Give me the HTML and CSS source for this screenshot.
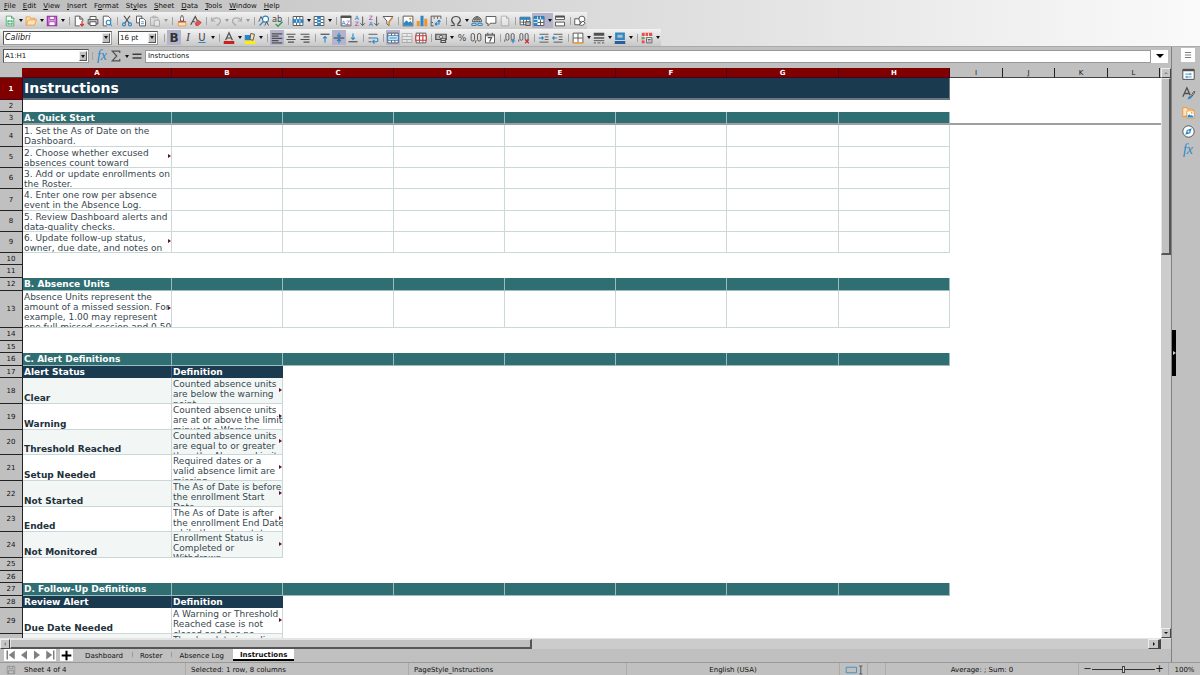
FILE: index.html
```html
<!DOCTYPE html>
<html lang="en">
<head>
<meta charset="utf-8">
<title>Instructions</title>
<link rel="stylesheet" href="styles.css">
</head>
<body>
<div class="app">
<header class="top">
<nav class="menubar" aria-label="Main menu">
<button><u>F</u>ile</button><button><u>E</u>dit</button><button><u>V</u>iew</button><button><u>I</u>nsert</button><button>F<u>o</u>rmat</button><button>St<u>y</u>les</button><button><u>S</u>heet</button><button><u>D</u>ata</button><button><u>T</u>ools</button><button><u>W</u>indow</button><button><u>H</u>elp</button>
</nav>
<div class="toolbar" role="toolbar" aria-label="Standard">
<button class="tool" aria-label="New"><svg viewBox="0 0 16 16"><path class="f-white s-green" d="M3 1.5h7l3 3v10H3z"/><path class="s-green" d="M10 1.5v3h3"/><path class="f-green" d="M4.500 7h7v6h-7z"/><path class="s-white" d="M5 10h6M8 7v6"/></svg></button><button class="drop" aria-label="New options"></button>
<button class="tool" aria-label="Open"><svg viewBox="0 0 16 16"><path class="f-cream s-orange" d="M1.500 13.500v-11h5l1 2h6v2"/><path class="f-cream s-orange" d="M1.500 13.500l3-7h11l-3 7z"/></svg></button><button class="drop" aria-label="Open options"></button>
<button class="tool" aria-label="Save"><svg viewBox="0 0 16 16"><path class="f-lilac s-purple2" d="M2 2h12v12H2z"/><path class="f-white s-purple" d="M5 2h6v4H5zM4 9h8v5H4z"/></svg></button><button class="drop" aria-label="Save options"></button>
<span class="sep"></span>
<button class="tool" aria-label="Export as PDF"><svg viewBox="0 0 16 16"><path class="f-white s-dark" d="M9 14.500H3v-13h6l4 4v3M9 1.500v4h4"/><path class="s-red2" d="M12 8v6M9.500 12l2.500 2.500L14.500 12"/></svg></button>
<button class="tool" aria-label="Print"><svg viewBox="0 0 16 16"><path class="f-grey s-dark" d="M1.500 6h13v6h-13z"/><path class="f-white s-dark" d="M4 2h8v4H4zM4 9h8v5H4z"/></svg></button>
<button class="tool" aria-label="Print preview"><svg viewBox="0 0 16 16"><path class="f-white s-dark" d="M13 8V5L9.500 1.500H3v13h5"/><circle class="f-white s-blue2" cx="10" cy="10" r="3"/><path class="s-blue2" d="M12.500 12.500l2 2"/></svg></button>
<span class="sep"></span>
<button class="tool" aria-label="Cut"><svg viewBox="0 0 16 16"><path class="s-dark2" d="M4 1l7 10M12 1L5 11"/><circle class="s-blue2" cx="4" cy="12.500" r="2"/><circle class="s-blue2" cx="12" cy="12.500" r="2"/></svg></button>
<button class="tool" aria-label="Copy"><svg viewBox="0 0 16 16"><path class="f-white s-dark" d="M2 1.500h7v9H2z"/><path class="f-white s-dark" d="M6 4.500h5l3 3v7H6z"/><path class="s-blue" d="M8 9h4M8 11.500h4"/></svg></button>
<button class="tool off" aria-label="Paste"><svg viewBox="0 0 16 16"><path class="s-dark" d="M2 3h10v11H2zM5 1.500h4V4H5z"/><path class="f-white s-dark" d="M7 7h7v8H7z"/></svg></button><button class="drop off" aria-label="Paste options"></button>
<span class="sep"></span>
<button class="tool" aria-label="Clone formatting"><svg viewBox="0 0 16 16"><path class="f-cream s-orange" d="M3 9h10v5.500H3z"/><path class="f-red" d="M3 8h10v2H3z"/><path class="f-white s-dark" d="M6 8V5l1-4h2l1 4v3z"/></svg></button>
<button class="tool" aria-label="Clear formatting"><svg viewBox="0 0 16 16"><path class="s-dark2" d="M1 13L7 2l3 6M3 9h4"/><path class="f-red s-red" d="M7 11l4-4 4 3-4 4H8z"/></svg></button>
<span class="sep"></span>
<button class="tool off" aria-label="Undo"><svg viewBox="0 0 16 16"><path class="s-dark2" d="M2 3v5h5M2 8c4-7 12-4 12 0 0 2-2 4-5 6"/></svg></button><button class="drop off" aria-label="Undo list"></button>
<button class="tool off" aria-label="Redo"><svg viewBox="0 0 16 16"><path class="s-dark2" d="M14 3v5H9M14 8C10 1 2 4 2 8c0 2 2 4 5 6"/></svg></button><button class="drop off" aria-label="Redo list"></button>
<span class="sep"></span>
<button class="tool" aria-label="Find and replace"><svg viewBox="0 0 16 16"><circle class="f-white s-blue2" cx="10" cy="5.500" r="4"/><path class="s-blue2" d="M7 9l-5 5"/><path class="s-dark" d="M1 9l3-7 2 4M9 14l2.500-5 2.500 5"/></svg></button>
<button class="tool" aria-label="Spelling"><svg viewBox="0 0 16 16"><text x="0" y="9" font-size="11">ab</text><path class="s-green2" d="M5 12l3 3 6-6"/></svg></button>
<span class="sep"></span>
<button class="tool" aria-label="Row"><svg viewBox="0 0 16 16"><path class="f-white s-dark" d="M1.500 2h13v12h-13z"/><path class="s-dark" d="M6 2v12M10.500 2v12"/><path class="f-blue" d="M1 5.500h14v5H1z"/><path class="s-white" d="M6 6v4M10.500 6v4"/></svg></button><button class="drop" aria-label="Row options"></button>
<button class="tool" aria-label="Column"><svg viewBox="0 0 16 16"><path class="f-white s-dark" d="M1.500 2h13v12h-13z"/><path class="s-dark" d="M2 6h12M2 10h12"/><path class="f-blue" d="M5.500 2h5v12h-5z"/><path class="s-white" d="M6 6h4M6 10h4"/></svg></button><button class="drop" aria-label="Column options"></button>
<span class="sep"></span>
<button class="tool" aria-label="Sort"><svg viewBox="0 0 16 16"><path class="f-white s-dark" d="M1.500 1.500h13v13h-13z"/><path class="f-dark" d="M1 1h14v3H1z"/><text class="t-blue" x="2" y="13" font-size="8">A</text><text class="t-purple" x="8" y="13" font-size="8">Z</text></svg></button>
<button class="tool" aria-label="Sort ascending"><svg viewBox="0 0 16 16"><text class="t-blue" x="1" y="7" font-size="8">A</text><text class="t-purple" x="1" y="15" font-size="8">Z</text><path class="s-dark" d="M11.500 2v12M8.500 11l3 3 3-3"/></svg></button>
<button class="tool" aria-label="Sort descending"><svg viewBox="0 0 16 16"><text class="t-purple" x="1" y="7" font-size="8">Z</text><text class="t-blue" x="1" y="15" font-size="8">A</text><path class="s-dark" d="M11.500 2v12M8.500 11l3 3 3-3"/></svg></button>
<button class="tool" aria-label="AutoFilter"><svg viewBox="0 0 16 16"><path class="f-white s-dark" d="M1.500 2h13L9.500 8v6L6.500 12V8z"/><path class="s-orange2" d="M14 4l-4.500 5v4"/></svg></button>
<span class="sep"></span>
<button class="tool" aria-label="Insert image"><svg viewBox="0 0 16 16"><path class="f-white s-dark" d="M1.500 1.500h13v13h-13z"/><path class="f-blue" d="M2 14V11l4-4 3 3 2-2 3 3v3z"/><circle class="f-orange" cx="11" cy="5" r="1.500"/></svg></button>
<button class="tool" aria-label="Insert chart"><svg viewBox="0 0 16 16"><path class="f-orange" d="M1 8h4v7H1z"/><path class="f-blue" d="M6 1h4v14H6z"/><path class="f-orange" d="M11 5h4v10h-4z"/></svg></button>
<button class="tool" aria-label="Pivot table"><svg viewBox="0 0 16 16"><path class="s-dark" d="M5 14.500H1.500v-13h13V5M5.500 2v3M2 10h2M10 2v3"/><path class="s-blue2" d="M7 12h5V7M9 10l-2 2 2 2M10 9l2-2 2 2"/></svg></button>
<span class="sep"></span>
<button class="tool" aria-label="Special character"><svg viewBox="0 0 16 16"><path class="s-dark2" d="M1 14h4.500v-2C0 8 2 2 8 2s8 6 2.500 10v2H15"/></svg></button><button class="drop" aria-label="Character options"></button>
<button class="tool" aria-label="Hyperlink"><svg viewBox="0 0 16 16"><path class="s-dark" d="M2 9c0-9 12-9 12 0zM8 2v7M3 5.500h10M8 2C5 4 5 7 5 9M8 2c3 2 3 5 3 7"/><rect class="s-blue2" x="1" y="11" width="6" height="3" rx="1.500"/><rect class="s-blue2" x="9" y="11" width="6" height="3" rx="1.500"/></svg></button>
<button class="tool" aria-label="Comment"><svg viewBox="0 0 16 16"><path class="f-white s-dark" d="M1.500 2h13v9H7l-3 3.500V11H1.500z"/></svg></button>
<button class="tool off" aria-label="Headers and footers"><svg viewBox="0 0 16 16"><path class="f-white s-dark" d="M3 1.500h7l3 3v10H3zM10 1.500v3h3"/></svg></button>
<span class="sep"></span>
<button class="tool" aria-label="Print area"><svg viewBox="0 0 16 16"><path class="f-white s-dark" d="M1.500 3h13v10h-13zM2 9.500h12M6 6v7M10 6v7"/><path class="f-blue" d="M1 3h14v3.500H1z"/><path class="f-grey s-dark" d="M9 9h6v5H9z"/></svg></button>
<button class="tool on" aria-label="Freeze rows and columns"><svg viewBox="0 0 16 16"><path class="f-white s-dark" d="M1.500 2h13v12h-13zM2 10h12M10 2v12"/><path class="f-blue" d="M1 2h14v4H6v8H1z"/><path class="s-white" d="M6 2v4H1M10 2v4M1 10h5"/></svg></button><button class="drop on" aria-label="Freeze options"></button>
<button class="tool" aria-label="Split window"><svg viewBox="0 0 16 16"><path class="f-white s-dark" d="M2 1.500h12V6H2zM2 9.500h12v5H2z"/><path class="f-dark" d="M2 1h12v2.500H2z"/></svg></button>
<span class="sep"></span>
<button class="tool" aria-label="Draw functions"><svg viewBox="0 0 16 16"><path class="f-white s-dark" d="M1 5h7v8H1z"/><circle class="f-white s-dark" cx="10.500" cy="5.500" r="4"/><path class="f-white s-dark" d="M7 13l5-5 3 3-4 3z"/></svg></button>
</div>
<div class="toolbar" role="toolbar" aria-label="Formatting">
<span class="combo font-name"><input aria-label="Font name" value="Calibri"><button class="spin" aria-label="Font list"></button></span>
<span class="combo font-size"><input aria-label="Font size" value="16 pt"><button class="spin" aria-label="Size list"></button></span>
<span class="sep"></span>
<button class="tool on glyph bold">B</button>
<button class="tool glyph italic">I</button>
<button class="tool glyph under">U</button><button class="drop" aria-label="Underline options"></button>
<span class="sep"></span>
<button class="tool" aria-label="Font color"><svg viewBox="0 0 16 16"><path class="s-dark2" d="M3.500 11L8 1l4.500 10M5 8h6"/><path class="f-crimson" d="M1 12h14v4H1z"/></svg></button><button class="drop" aria-label="Font color options"></button>
<button class="tool" aria-label="Highlight color"><svg viewBox="0 0 16 16"><path class="f-blue" d="M1 4h7l2 3-2 4H1z"/><path class="f-cream s-dark" d="M9 2l5 1-2 8-4-1z"/><path class="f-yellow" d="M1 12h14v4H1z"/></svg></button><button class="drop" aria-label="Highlight options"></button>
<span class="sep"></span>
<button class="tool on" aria-label="Align left"><svg viewBox="0 0 16 16"><path class="s-dark2" d="M1 2.500h14M1 5.500h9M1 8.500h14M1 11.500h9M1 14.500h14"/></svg></button>
<button class="tool" aria-label="Align center"><svg viewBox="0 0 16 16"><path class="s-dark2" d="M2 3h12M4 6.500h8M2 10h12M4 13.500h8"/></svg></button>
<button class="tool" aria-label="Align right"><svg viewBox="0 0 16 16"><path class="s-dark2" d="M2 3h12M6 6.500h8M2 10h12M6 13.500h8"/></svg></button>
<span class="sep"></span>
<button class="tool" aria-label="Align top"><svg viewBox="0 0 16 16"><path class="s-dark2" d="M2 3h12"/><path class="s-blue2" d="M8 14V6M5.500 8.500L8 6l2.500 2.500"/></svg></button>
<button class="tool on" aria-label="Center vertically"><svg viewBox="0 0 16 16"><path class="s-dark2" d="M1 8h14"/><path class="s-blue2" d="M8 1v5M5.500 4L8 6.500 10.500 4M8 15v-5M5.500 12L8 9.500l2.500 2.500"/></svg></button>
<button class="tool" aria-label="Align bottom"><svg viewBox="0 0 16 16"><path class="s-dark2" d="M2 13h12"/><path class="s-blue2" d="M8 2v8M5.500 7.500L8 10l2.500-2.500"/></svg></button>
<span class="sep"></span>
<button class="tool" aria-label="Wrap text"><svg viewBox="0 0 16 16"><path class="s-dark" d="M2 3h12M2 13h4M2 8h3"/><path class="s-blue2" d="M5 8h8c2 0 2 5 0 5H8M10 10.500L7.500 13l2.500 2.500"/></svg></button>
<span class="sep"></span>
<button class="tool on" aria-label="Merge and center"><svg viewBox="0 0 16 16"><path class="f-white s-dark" d="M1 1.500h14v13H1zM6 2v12M10.500 2v12"/><path class="f-white s-blue2" d="M1 5h14v6H1z"/><path class="s-blue2" d="M3 8h10"/></svg></button>
<button class="tool off" aria-label="Merge cells"><svg viewBox="0 0 16 16"><path class="f-white s-dark" d="M1.500 2h13v12h-13zM2 6h12M2 10h12M8 2v4M8 10v4"/></svg></button>
<button class="tool" aria-label="Unmerge cells"><svg viewBox="0 0 16 16"><path class="f-white s-dark" d="M1.500 1.500h13v13h-13zM6 2v12M10.500 2v12"/><path class="f-white s-red2" d="M1 5h14v6H1zM6 5v6M10.500 5v6"/></svg></button>
<span class="sep"></span>
<button class="tool" aria-label="Currency"><svg viewBox="0 0 16 16"><path class="f-grey s-dark2" d="M1 3h14v7H1z"/><circle class="f-white s-dark" cx="8" cy="6.500" r="2"/><path class="f-white s-dark2" d="M8 9h6v5H8zM8 11.500h6"/></svg></button><button class="drop" aria-label="Currency options"></button>
<button class="tool glyph" aria-label="Percent">%</button>
<button class="tool" aria-label="Number format"><svg viewBox="0 0 16 16"><rect class="s-dark" x="1.500" y="2" width="4.500" height="10" rx="2.200"/><path class="s-dark" d="M8 11l-1 3.500"/><rect class="s-dark" x="10" y="2" width="4.500" height="10" rx="2.200"/></svg></button>
<button class="tool" aria-label="Date format"><svg viewBox="0 0 16 16"><path class="f-white s-dark" d="M2 3h12v11.500H2zM2 5h12M5 1v3M11 1v3"/><path class="s-dark2" d="M5 7.500h5L7.500 13"/></svg></button>
<span class="sep"></span>
<button class="tool" aria-label="Add decimal place"><svg viewBox="0 0 16 16"><rect class="s-dark" x="2.500" y="2" width="4" height="9" rx="2"/><rect class="s-dark" x="9.500" y="2" width="4" height="9" rx="2"/><path class="s-dark" d="M1 10v3"/><path class="s-blue2" d="M9 12h6M12 9v6"/></svg></button>
<button class="tool" aria-label="Delete decimal place"><svg viewBox="0 0 16 16"><rect class="s-dark" x="2.500" y="2" width="4" height="9" rx="2"/><rect class="s-dark" x="9.500" y="2" width="4" height="9" rx="2"/><path class="s-dark" d="M1 10v3"/><path class="s-red2" d="M9.500 10l5 5M14.500 10l-5 5"/></svg></button>
<span class="sep"></span>
<button class="tool" aria-label="Increase indent"><svg viewBox="0 0 16 16"><path class="s-dark" d="M2 3h12M9 6.500h5M9 10h5M2 13.500h12"/><path class="s-blue2" d="M1 8h6M5 6l2 2-2 2"/></svg></button>
<button class="tool" aria-label="Decrease indent"><svg viewBox="0 0 16 16"><path class="s-dark" d="M2 3h12M9 6.500h5M9 10h5M2 13.500h12"/><path class="s-blue2" d="M1 8h6M3 6L1 8l2 2"/></svg></button>
<span class="sep"></span>
<button class="tool" aria-label="Borders"><svg viewBox="0 0 16 16"><path class="f-white s-dark" d="M1.500 14.500v-13h13v13M8 2v12M2 8h12"/><path class="s-orange2" d="M1 14.500h14"/></svg></button><button class="drop" aria-label="Borders options"></button>
<button class="tool" aria-label="Border style"><svg viewBox="0 0 16 16"><path class="f-dark" d="M1 1h14v4H1zM1 7h14v2H1z"/><path class="s-dark" d="M1 11.500h14M1 14.500h3M6 14.500h4M12 14.500h3"/></svg></button><button class="drop" aria-label="Border style options"></button>
<button class="tool" aria-label="Border color"><svg viewBox="0 0 16 16"><path class="f-grey s-blue3" d="M3 2h10v7H3z"/><path class="f-navy" d="M1 12h14v4H1z"/></svg></button><button class="drop" aria-label="Border color options"></button>
<span class="sep"></span>
<button class="tool" aria-label="Conditional formatting"><svg viewBox="0 0 16 16"><path class="f-red" d="M1 1h14v5H1zM1 6h5v9H1z"/><path class="f-green" d="M1 6h4v4H1z"/><path class="s-white" d="M5.500 1v14M10 1v6M1 6h14M1 10.500h5"/><path class="f-white s-dark" d="M7.500 7.500h7v7h-7z"/><path class="s-dark" d="M9 10h4M9 12h4"/></svg></button><button class="drop" aria-label="Conditional options"></button>
</div>
</header>

<div class="workspace">
<main class="main">
<div class="formula-bar">
<span class="combo name-box"><input aria-label="Name box" value="A1:H1"><button class="spin" aria-label="Named ranges"></button></span>
<span class="sep"></span>
<button class="tool glyph fx" aria-label="Function wizard">fx</button>
<button class="tool" aria-label="Select function"><svg viewBox="0 0 16 16"><path class="s-dark2" d="M13 4V1.500H3L9 8l-6 6.500h10V12"/></svg></button><button class="drop" aria-label="Function list"></button>
<button class="tool" aria-label="Formula"><svg viewBox="0 0 16 16"><path class="s-dark3" d="M2 5.500h12M2 10.500h12"/></svg></button>
<input class="formula" aria-label="Input line" value="Instructions">
<button class="expand" aria-label="Expand formula bar"></button>
</div>

<div class="grid-area">
<div class="sheet">
<table>
<colgroup><col class="c-head"><col class="c-a"><col class="c-b"><col class="c-b"><col class="c-b"><col class="c-b"><col class="c-b"><col class="c-e"><col class="c-b"><col class="c-i"><col class="c-j"><col class="c-i"><col class="c-j"><col></colgroup>
<thead>
<tr><th class="corner"></th><th class="sel">A</th><th class="sel">B</th><th class="sel">C</th><th class="sel">D</th><th class="sel">E</th><th class="sel">F</th><th class="sel">G</th><th class="sel">H</th><th>I</th><th>J</th><th>K</th><th>L</th><th></th></tr>
</thead>
<tbody>
<tr class="h22"><th class="sel">1</th><td class="title" colspan="8">Instructions</td><td colspan="5"></td></tr>
<tr class="h12"><th>2</th><td colspan="13"></td></tr>
<tr class="h13 section frozen"><th>3</th><td>A. Quick Start</td><td></td><td></td><td></td><td></td><td></td><td></td><td></td><td class="blank" colspan="5"></td></tr>
<tr class="h22 lined"><th>4</th><td><div class="clip">1. Set the As of Date on the<br>Dashboard.</div></td><td></td><td></td><td></td><td></td><td></td><td></td><td></td></tr>
<tr class="h21 lined"><th>5</th><td class="more"><div class="clip">2. Choose whether excused<br>absences count toward</div></td><td></td><td></td><td></td><td></td><td></td><td></td><td></td></tr>
<tr class="h21 lined"><th>6</th><td><div class="clip">3. Add or update enrollments on<br>the Roster.</div></td><td></td><td></td><td></td><td></td><td></td><td></td><td></td></tr>
<tr class="h22 lined"><th>7</th><td><div class="clip">4. Enter one row per absence<br>event in the Absence Log.</div></td><td></td><td></td><td></td><td></td><td></td><td></td><td></td></tr>
<tr class="h21 lined"><th>8</th><td><div class="clip">5. Review Dashboard alerts and<br>data-quality checks.</div></td><td></td><td></td><td></td><td></td><td></td><td></td><td></td></tr>
<tr class="h21 lined"><th>9</th><td class="more"><div class="clip">6. Update follow-up status,<br>owner, due date, and notes on</div></td><td></td><td></td><td></td><td></td><td></td><td></td><td></td></tr>
<tr class="h12"><th>10</th><td colspan="13"></td></tr>
<tr class="h13"><th>11</th><td colspan="13"></td></tr>
<tr class="h13 section"><th>12</th><td>B. Absence Units</td><td></td><td></td><td></td><td></td><td></td><td></td><td></td></tr>
<tr class="h37 lined"><th>13</th><td class="more"><div class="clip">Absence Units represent the<br>amount of a missed session. For<br>example, 1.00 may represent<br>one full missed session and 0.50</div></td><td></td><td></td><td></td><td></td><td></td><td></td><td></td></tr>
<tr class="h13"><th>14</th><td colspan="13"></td></tr>
<tr class="h12"><th>15</th><td colspan="13"></td></tr>
<tr class="h13 section"><th>16</th><td>C. Alert Definitions</td><td></td><td></td><td></td><td></td><td></td><td></td><td></td></tr>
<tr class="h12 heading"><th>17</th><td>Alert Status</td><td>Definition</td></tr>
<tr class="h26 lined tint"><th>18</th><td class="label">Clear</td><td class="more"><div class="clip">Counted absence units<br>are below the warning<br>point.</div></td></tr>
<tr class="h26 lined"><th>19</th><td class="label">Warning</td><td class="more"><div class="clip">Counted absence units<br>are at or above the limit<br>minus the Warning</div></td></tr>
<tr class="h25 lined tint"><th>20</th><td class="label">Threshold Reached</td><td class="more"><div class="clip">Counted absence units<br>are equal to or greater<br>than the Absence Limit.</div></td></tr>
<tr class="h26 lined"><th>21</th><td class="label">Setup Needed</td><td class="more"><div class="clip">Required dates or a<br>valid absence limit are<br>missing.</div></td></tr>
<tr class="h26 lined tint"><th>22</th><td class="label">Not Started</td><td class="more"><div class="clip">The As of Date is before<br>the enrollment Start<br>Date.</div></td></tr>
<tr class="h25 lined"><th>23</th><td class="label">Ended</td><td class="more"><div class="clip">The As of Date is after<br>the enrollment End Date<br>while the roster status</div></td></tr>
<tr class="h26 lined tint"><th>24</th><td class="label">Not Monitored</td><td class="more"><div class="clip">Enrollment Status is<br>Completed or<br>Withdrawn.</div></td></tr>
<tr class="h13"><th>25</th><td colspan="13"></td></tr>
<tr class="h12"><th>26</th><td colspan="13"></td></tr>
<tr class="h13 section"><th>27</th><td>D. Follow-Up Definitions</td><td></td><td></td><td></td><td></td><td></td><td></td><td></td></tr>
<tr class="h12 heading"><th>28</th><td>Review Alert</td><td>Definition</td></tr>
<tr class="h26 lined"><th>29</th><td class="label">Due Date Needed</td><td class="more"><div class="clip">A Warning or Threshold<br>Reached case is not<br>closed and has no</div></td></tr>
<tr class="h26 lined tint"><th></th><td></td><td><div class="clip">The due date is earlier</div></td></tr>
</tbody>
</table>
</div>
<div class="vscroll"><button class="arrow up" aria-label="Scroll up"></button><div class="vthumb"></div><button class="arrow down" aria-label="Scroll down"></button></div>
</div>

<div class="hscroll"><button class="arrow left" aria-label="Scroll left"></button><div class="hthumb"></div><button class="arrow right" aria-label="Scroll right"></button></div>
<nav class="tabs" aria-label="Sheets">
<span class="tab-nav">
<button aria-label="First sheet"><svg viewBox="0 0 16 16"><path class="f-mid" d="M2 2h2v12H2zM13 2v12L5 8z"/></svg></button><button aria-label="Previous sheet"><svg viewBox="0 0 16 16"><path class="f-mid" d="M12 2v12L4 8z"/></svg></button><button aria-label="Next sheet"><svg viewBox="0 0 16 16"><path class="f-mid" d="M4 2v12l8-6z"/></svg></button><button aria-label="Last sheet"><svg viewBox="0 0 16 16"><path class="f-mid" d="M12 2h2v12h-2zM3 2v12l8-6z"/></svg></button>
</span>
<button class="add" aria-label="Add sheet"><svg viewBox="0 0 16 16"><path class="s-black3" d="M1 8h14M8 1v14"/></svg></button>
<button class="tab">Dashboard</button><button class="tab">Roster</button><button class="tab">Absence Log</button><button class="tab active">Instructions</button>
</nav>
</main>
<aside class="sidebar" aria-label="Sidebar">
<button class="menu" aria-label="Sidebar settings"><svg viewBox="0 0 16 16"><path class="s-dark" d="M3 4h10M3 8h10M3 12h10"/></svg></button>
<button aria-label="Properties"><svg viewBox="0 0 16 16"><path class="f-white s-dark" d="M1 2h14v12H1z"/><path class="f-dark" d="M1 1h14v3H1z"/><path class="s-blue" d="M4 7.500h8M10 6v3M4 11h8M6 9.500v3"/></svg></button>
<button aria-label="Styles"><svg viewBox="0 0 16 16"><path class="s-dark2" d="M1 12L6 1l4 9M3 8h6"/><path class="f-white s-dark" d="M15 5l-4 6 1 1 4-6z"/><path class="f-blue" d="M7 15c1-4 3-5 5-3 0 2-2 3-5 3z"/></svg></button>
<button aria-label="Gallery"><svg viewBox="0 0 16 16"><path class="f-cream s-orange" d="M1 13V2h5l1 2h7v3M1 13h5"/><path class="f-white s-orange" d="M6 6h9v9H6z"/><path class="f-blue" d="M7 14v-2l2-2 2 2 1-1 2 2v1z"/><circle class="f-orange" cx="12" cy="8.500" r="1"/></svg></button>
<button aria-label="Navigator"><svg viewBox="0 0 16 16"><circle class="f-white s-dark" cx="8" cy="8" r="7"/><path class="f-blue" d="M12 4l-2 6-6 2 2-6z"/><circle class="f-white" cx="8" cy="8" r="1.200"/></svg></button>
<button class="fx" aria-label="Functions">fx</button>
<button class="handle" aria-label="Hide sidebar"></button>
</aside>
</div>

<footer class="status">
<span class="st-doc"><svg viewBox="0 0 16 16"><path class="s-mid" d="M2 2h12v12H2zM5 2v4h6V2M4 14V9h8v5"/></svg>Sheet 4 of 4</span>
<span class="st-sel">Selected: 1 row, 8 columns</span>
<span class="st-style">PageStyle_Instructions</span>
<span class="st-lang">English (USA)</span>
<span class="st-mode"><svg viewBox="0 0 24 12"><path class="s-blue" d="M1.500 2.500h13v7h-13z"/><path class="s-dark" d="M18 1h4M20 1v10M18 11h4"/></svg></span>
<span class="st-gap"></span>
<span class="st-sum">Average: ; Sum: 0</span>
<span class="st-zoom"><button aria-label="Zoom out">−</button><input type="range" aria-label="Zoom" min="0" max="200" value="100"><button aria-label="Zoom in">+</button></span>
<span class="st-pct">100%</span>
</footer>
</div>
</body>
</html>
```
FILE: styles.css
```css
* { box-sizing: border-box; }

body {
  margin: 0;
  font: 7px/10px "DejaVu Sans", sans-serif;
  color: #111;
  background: #c0c0c0;
}

button, input {
  font: inherit;
  color: inherit;
  margin: 0;
  padding: 0;
  border: 0;
  background: none;
  min-width: 0;
}

.app { display: flex; flex-direction: column; height: 100vh; }

/* Menus and toolbars */
.top { background: linear-gradient(90deg, #bcbcbc, #dedede 55%, #fafafa); border-bottom: 1px solid #aaa; }
.menubar { display: flex; height: 12px; padding-left: 1px; }
.menubar button { padding: 0 4px 0 3px; }

.toolbar {
  display: flex;
  align-items: center;
  width: max-content;
  height: 17px;
  padding-left: 3px;
  background: linear-gradient(#f2f2f2, #c8c8c8);
}

.tool {
  display: flex;
  align-items: center;
  justify-content: center;
  flex: none;
  width: 14px;
  height: 15px;
}
.tool svg { width: 12px; height: 12px; }
.on { background: #b3b3cb; }
.off { opacity: .35; }

.drop { flex: none; width: 7px; height: 15px; display: flex; align-items: center; justify-content: center; }
.drop::before, .spin::before {
  content: "";
  border: 2px solid transparent;
  border-top: 3px solid #111;
  border-bottom: 0;
}

.sep { flex: none; width: 6px; height: 8px; display: flex; justify-content: center; }
.sep::before { content: ""; width: 1px; background: #a2a2a2; }

.glyph { font-size: 9px; color: #444; }
.bold { font-size: 12px; font-weight: bold; color: #333; }
.italic { font: italic 12px "Liberation Serif", serif; }
.under { font-size: 10px; text-decoration: underline; text-decoration-color: #2a87c8; }
.fx { font: italic 14px "Liberation Serif", serif; color: #2a87c8; }

.combo {
  display: flex;
  height: 14px;
  padding: 1px;
  background: #fff;
  border: 1px solid #555;
  border-right-color: #999;
  border-bottom-color: #999;
}
.combo input { flex: 1; width: 0; }
.spin {
  display: flex;
  align-items: center;
  justify-content: center;
  width: 8px;
  background: #c0c0c0;
  border: 1px solid #eee;
  border-right-color: #555;
  border-bottom-color: #555;
}
.font-name { width: 109px; }
.font-name input { font-size: 8px; font-style: italic; }
.font-size { width: 40px; margin: 0 3px 0 6px; }
.name-box { width: 86px; }

/* Icon paint */
svg { display: block; fill: none; overflow: visible; }
svg text { fill: #444; }
svg .t-blue { fill: #1c7cc0; }
svg .t-purple { fill: #a030b0; }
.f-white { fill: #fff; }
.f-green { fill: #48b070; }
.f-cream { fill: #fde2b8; }
.f-lilac { fill: #dd98e4; }
.f-grey { fill: #bbb; }
.f-red { fill: #e05050; }
.f-crimson { fill: #c9211e; }
.f-yellow { fill: #ffee00; }
.f-blue { fill: #2a87c8; }
.f-orange { fill: #f0932b; }
.f-dark { fill: #505050; }
.f-navy { fill: #2a6099; }
.f-mid { fill: #808080; }
.s-white { stroke: #fff; }
.s-green { stroke: #2f9e58; }
.s-green2 { stroke: #2f9e58; stroke-width: 2; }
.s-orange { stroke: #e8912d; }
.s-orange2 { stroke: #e8912d; stroke-width: 2; }
.s-purple { stroke: #9a3aa8; }
.s-purple2 { stroke: #9a3aa8; stroke-width: 2; }
.s-dark { stroke: #505050; stroke-width: 1.2; }
.s-dark2 { stroke: #505050; stroke-width: 1.6; }
.s-dark3 { stroke: #404040; stroke-width: 2; }
.s-mid { stroke: #808080; }
.s-red { stroke: #d03030; }
.s-red2 { stroke: #d03030; stroke-width: 1.5; }
.s-blue { stroke: #2a87c8; }
.s-blue2 { stroke: #2a87c8; stroke-width: 1.5; }
.s-blue3 { stroke: #2a87c8; stroke-width: 3; }
.s-black3 { stroke: #000; stroke-width: 3; }

/* Workspace */
.workspace { display: flex; flex: 1; min-height: 0; }
.main { display: flex; flex-direction: column; flex: 1; min-width: 0; }

.formula-bar { display: flex; align-items: center; height: 21px; padding: 0 3px 3px; }
.formula {
  flex: 1;
  height: 13px;
  margin-left: 1px;
  padding-left: 2px;
  background: #fff;
  border: 1px solid #999;
}
.expand {
  display: flex;
  align-items: center;
  justify-content: center;
  width: 17px;
  height: 13px;
  background: #fff;
}
.expand::before { content: ""; border: 4px solid transparent; border-top: 4px solid #000; border-bottom: 0; }

.grid-area { display: flex; flex: 1; min-height: 0; }
.sheet { flex: 1; min-width: 0; overflow: hidden; background: #fff; }

table { width: 100%; table-layout: fixed; border-spacing: 0; font-size: 9px; }
.c-head { width: 23px; }
.c-a { width: 149px; }
.c-b { width: 111px; }
.c-e { width: 112px; }
.c-i { width: 53px; }
.c-j { width: 52px; }

th {
  padding: 0;
  font-size: 7px;
  font-weight: normal;
  line-height: 8px;
  background: #c0c0c0;
  border-right: 1px solid #222;
  border-bottom: 1px solid #222;
}
thead th { height: 10px; border-bottom-color: #444; }
thead th:last-child { border-right: 0; }
.corner { border-right-color: #800000; }
th.sel { background: #800000; color: #fff; font-weight: bold; border-right-color: #4a0020; border-bottom-color: #4a0020; }

td { padding: 0 1px; line-height: 10px; color: #37474f; white-space: nowrap; }
.h12 { --row: 12px; }
.h13 { --row: 13px; }
.h21 { --row: 21px; }
.h22 { --row: 22px; }
.h25 { --row: 25px; }
.h26 { --row: 26px; }
.h37 { --row: 37px; }
tbody tr { height: var(--row); }

.clip { height: calc(var(--row) - 1px); margin-right: -2px; padding-top: 1px; overflow: hidden; }

.title {
  font-size: 14px;
  line-height: 18px;
  font-weight: bold;
  color: #fff;
  background: #1a3a4f;
  border-right: 1px solid #777;
  border-bottom: 2px solid #6c7780;
}
.section td {
  font-weight: bold;
  color: #fff;
  background: #2f6f73;
  border: 1px solid #9dbcbc;
  border-width: 0 1px 1px 0;
}
.section td.blank { background: #fff; border-right: 0; }
.frozen td, .frozen td.blank { border-bottom: 2px solid #a0a0a0; }
.heading td { font-weight: bold; color: #fff; background: #1a3a4f; }
.heading td:nth-of-type(1) { border-right: 1px solid #49606f; }
.lined td { border: 1px solid #cbd8d8; border-width: 0 1px 1px 0; }
.tint td { background: #f2f7f6; }
.label { font-weight: bold; vertical-align: bottom; }
.lined .label { color: #22303a; }

.more { position: relative; }
.more::after {
  content: "";
  position: absolute;
  right: 0;
  top: 50%;
  margin-top: -3px;
  border: 2px solid transparent;
  border-left: 3px solid #601020;
  border-right: 0;
}

/* Scrollbars */
.arrow {
  flex: none;
  display: flex;
  align-items: center;
  justify-content: center;
  width: 10px;
  height: 10px;
  background: #c6c6c6;
  border: 1px solid #eee;
  border-right-color: #444;
  border-bottom-color: #444;
}
.arrow::before { content: ""; border: 2px solid transparent; }
.up::before { border-bottom-color: #888; border-top: 0; }
.down::before { border-top-color: #111; border-bottom: 0; }
.left::before { border-right-color: #888; border-left: 0; }
.right::before { border-left-color: #111; border-right: 0; }

.vscroll { display: flex; flex-direction: column; width: 10px; background: #ccc; }
.vthumb { height: 31%; background: #c0c0c0; border: 1px solid #e4e4e4; border-right: 2px solid #555; border-bottom: 2px solid #555; }
.down { margin-top: auto; }

.hscroll { display: flex; height: 11px; padding-right: 10px; background: #ccc; border-top: 1px solid #e4e4e4; }
.hthumb { width: 45%; background: #c0c0c0; border: 1px solid #e4e4e4; border-right: 2px solid #555; border-bottom: 2px solid #555; }
.right { margin-left: auto; width: 13px; border-right-width: 3px; }

/* Sheet tabs */
.tabs { display: flex; height: 13px; padding: 0 4px 1px; }
.tab-nav { display: flex; margin-right: 4px; background: #fff; }
.tab-nav button, .add { width: 13px; display: flex; align-items: center; justify-content: center; }
.tab-nav svg { width: 12px; height: 12px; }
.add { background: #fff; margin-right: 4px; }
.add svg { width: 11px; height: 11px; }
.tab { position: relative; padding: 1px 9px 0 8px; }
.tab + .tab::before { content: ""; position: absolute; left: 0; top: 3px; height: 5px; border-left: 1px solid #999; }
.tab.active { padding: 1px 7px 0; font-weight: bold; background: #fff; border-bottom: 2px solid #000; }
.tab.active::before { display: none; }

/* Sidebar */
.sidebar {
  position: relative;
  display: flex;
  flex-direction: column;
  align-items: center;
  gap: 5px;
  width: 29px;
  padding: 1px 0 0 4px;
  border-left: 1px solid #808080;
}
.sidebar button { display: flex; align-items: center; justify-content: center; width: 14px; height: 14px; }
.sidebar svg { width: 13px; height: 13px; }
.sidebar .menu { background: #fff; }
.sidebar .menu svg { width: 10px; height: 10px; }
.sidebar .handle { position: absolute; left: 0; top: 46%; width: 4px; height: 46px; background: #000; }
.handle::before { content: ""; border: 2px solid transparent; border-left: 3px solid #ccc; border-right: 0; }

/* Status bar */
.status { display: flex; height: 13px; border-top: 1px solid #999; line-height: 12px; }
.status > span { display: flex; align-items: center; flex: none; padding-top: 1px; white-space: nowrap; border-right: 1px solid #aaa; }
.status .st-doc { width: 186px; gap: 8px; padding-left: 6px; }
.st-doc svg { width: 10px; height: 10px; }
.status .st-sel { width: 223px; padding-left: 5px; }
.status .st-style { flex: 1; padding-left: 5px; }
.status .st-lang { flex: 1; justify-content: center; }
.status .st-mode { width: 28px; padding-left: 5px; }
.st-mode svg { width: 19px; height: 10px; }
.st-gap { width: 18px; }
.st-sum { width: 193px; justify-content: center; }
.status .st-zoom { width: 90px; padding: 0 4px; }
.st-zoom button { width: 9px; font-size: 10px; }
.status .st-pct { width: 31px; justify-content: center; border-right: 0; }
.st-zoom input { flex: 1; width: 0; height: 8px; appearance: none; background: linear-gradient(#333, #333) center / 100% 1px no-repeat; }
.st-zoom input::-webkit-slider-thumb { appearance: none; width: 3px; height: 7px; background: #ddd; border: 1px solid #444; }
```
